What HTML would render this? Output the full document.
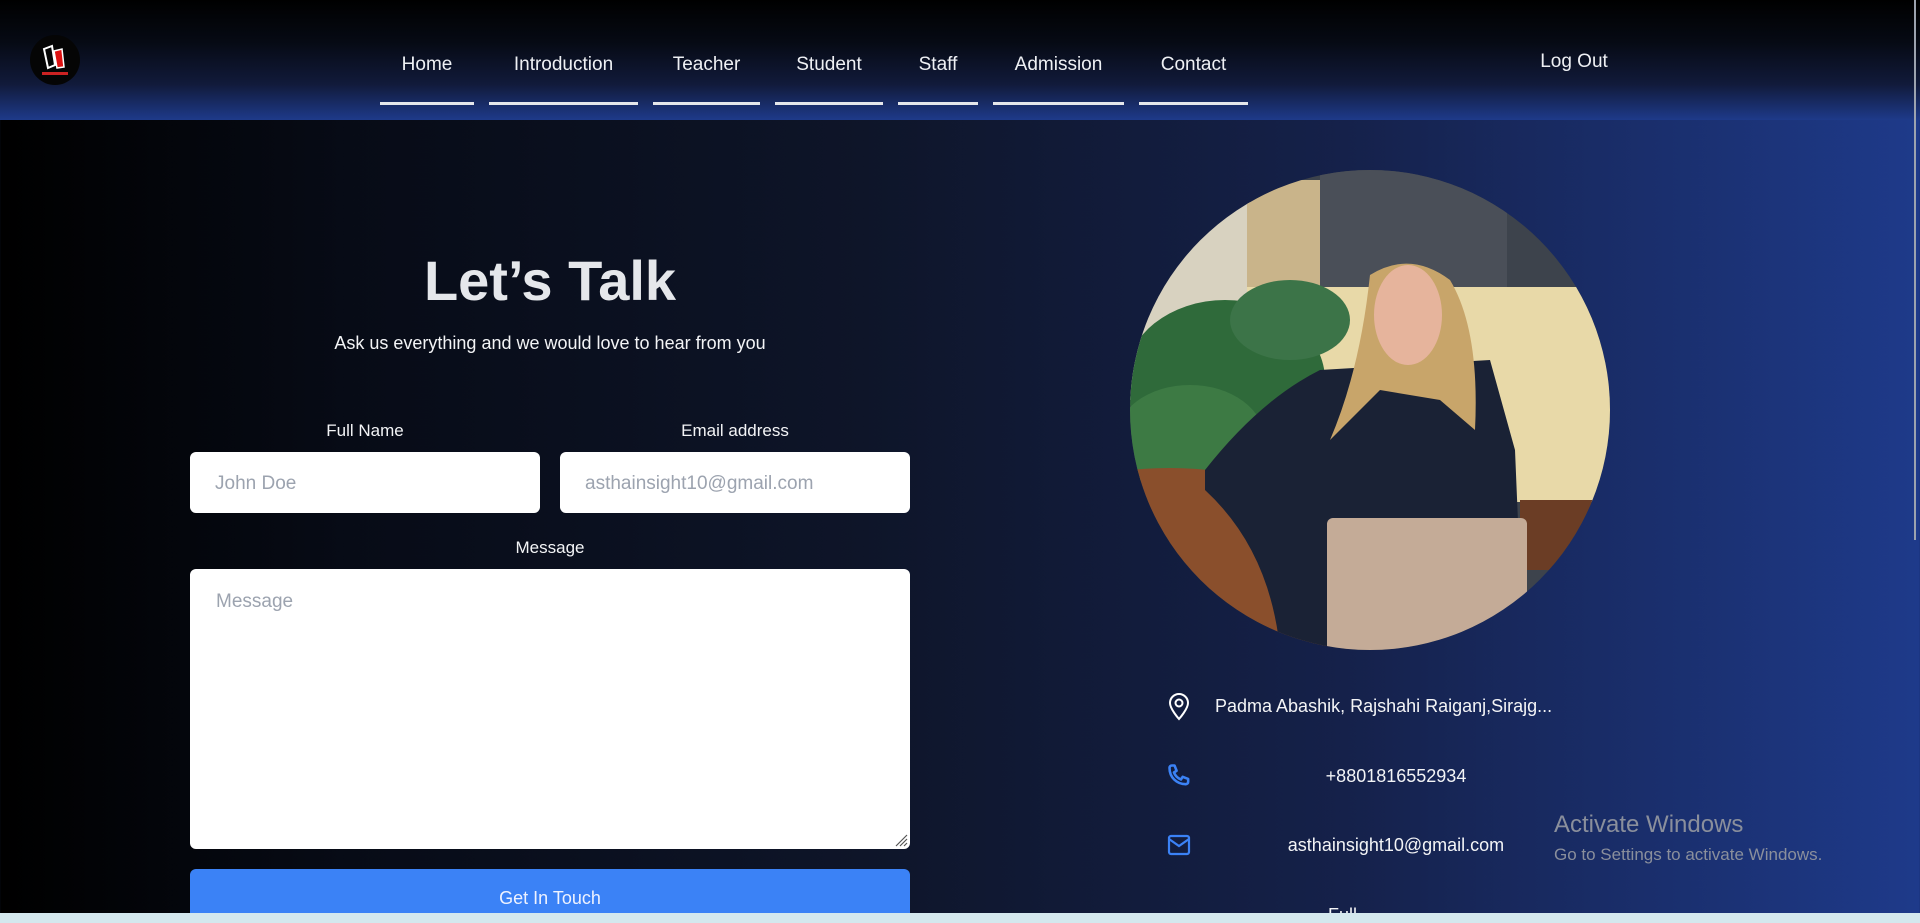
<!DOCTYPE html>
<html><head><meta charset="utf-8"><style>
*{margin:0;padding:0;box-sizing:border-box}
html,body{width:1920px;height:923px;overflow:hidden}
body{font-family:"Liberation Sans",sans-serif;background:linear-gradient(to right,#000 0%,#070b16 18%,#0e1529 45%,#15214a 70%,#1e3a8a 100%);position:relative;color:#e5e7eb}
.hdr{position:absolute;left:0;top:0;width:1920px;height:120px;background:linear-gradient(to bottom,#000 0%,#060a14 35%,#111a3a 70%,#1e3a8a 100%)}
.nav{position:absolute;top:54px;font-size:19px;color:#eef0f4;text-align:center}
.ul{position:absolute;top:102px;height:3px;background:#e5e7eb}
.abs{position:absolute}
.inp{position:absolute;background:#fff;border-radius:6px;color:#9ca3af;font-size:19px}
.lbl{position:absolute;font-size:17px;color:#f3f4f6;text-align:center}
</style></head><body>
<div class="hdr"></div>
<div class="abs" style="left:30px;top:35px;width:50px;height:50px;border-radius:50%;background:#050505">
<svg width="50" height="50" viewBox="0 0 50 50"><path d="M14 14 L22 11 L25 30 L18 33 Z" fill="none" stroke="#fff" stroke-width="2"/><path d="M24 16 L32 14 L34 32 L27 33 Z" fill="#d11" stroke="#fff" stroke-width="1.5"/><rect x="12" y="37" width="26" height="3" fill="#c22"/></svg></div>
<div class="nav" style="left:380px;width:94px">Home</div>
<div class="nav" style="left:489px;width:149px">Introduction</div>
<div class="nav" style="left:653px;width:107px">Teacher</div>
<div class="nav" style="left:775px;width:108px">Student</div>
<div class="nav" style="left:898px;width:80px">Staff</div>
<div class="nav" style="left:993px;width:131px">Admission</div>
<div class="nav" style="left:1139px;width:109px">Contact</div>
<div class="nav" style="left:1530px;width:88px;top:51px">Log Out</div>
<div class="ul" style="left:380px;width:94px"></div>
<div class="ul" style="left:489px;width:149px"></div>
<div class="ul" style="left:653px;width:107px"></div>
<div class="ul" style="left:775px;width:108px"></div>
<div class="ul" style="left:898px;width:80px"></div>
<div class="ul" style="left:993px;width:131px"></div>
<div class="ul" style="left:1139px;width:109px"></div>
<div class="abs" style="left:1914px;top:0;width:2px;height:540px;background:#9ca3af"></div>

<div class="abs" style="left:190px;width:720px;top:248px;text-align:center;font-size:56px;font-weight:bold;color:#e5e7eb">Let’s Talk</div>
<div class="abs" style="left:190px;width:720px;top:333px;text-align:center;font-size:18px;color:#f3f4f6">Ask us everything and we would love to hear from you</div>
<div class="lbl" style="left:190px;width:350px;top:421px">Full Name</div>
<div class="lbl" style="left:560px;width:350px;top:421px">Email address</div>
<div class="inp" style="left:190px;top:452px;width:350px;height:61px;padding:21px 0 0 25px">John Doe</div>
<div class="inp" style="left:560px;top:452px;width:350px;height:61px;padding:21px 0 0 25px">asthainsight10@gmail.com</div>
<div class="lbl" style="left:190px;width:720px;top:538px">Message</div>
<div class="inp" style="left:190px;top:569px;width:720px;height:280px;padding:22px 0 0 26px">Message
<svg class="abs" style="right:2px;bottom:2px" width="14" height="14"><path d="M2 13 L13 2 M6 13 L13 6 M10 13 L13 10" stroke="#555" stroke-width="1.2"/></svg></div>
<div class="abs" style="left:190px;top:869px;width:720px;height:60px;background:#3b82f6;border-radius:6px;color:#eef2ff;font-size:18px;text-align:center;padding-top:19px">Get In Touch</div>

<svg class="abs" style="left:1130px;top:170px" width="480" height="480" viewBox="0 0 480 480">
<defs><clipPath id="c"><circle cx="240" cy="240" r="240"/></clipPath></defs>
<g clip-path="url(#c)">
<rect width="480" height="480" fill="#3d434c"/>
<rect x="0" y="30" width="120" height="200" fill="#d8d2c0"/>
<rect x="117" y="10" width="73" height="113" fill="#c9b48a"/>
<rect x="190" y="0" width="187" height="123" fill="#4a4f58"/>
<rect x="117" y="117" width="363" height="215" fill="#e8d9a8"/>
<ellipse cx="95" cy="210" rx="100" ry="80" fill="#2f6a3a"/>
<ellipse cx="60" cy="270" rx="75" ry="55" fill="#3d7a44"/>
<ellipse cx="160" cy="150" rx="60" ry="40" fill="#3c7448"/>
<rect x="390" y="330" width="90" height="70" fill="#6b3d25"/>
<path d="M0 300 Q100 290 190 330 L200 480 L0 480 Z" fill="#8a4f2c"/>
<path d="M75 300 Q130 230 190 200 L360 190 L385 280 L390 400 L200 480 L150 480 Q140 380 75 320 Z" fill="#1a2235"/>
<path d="M240 105 Q280 80 320 110 Q350 160 345 260 L310 230 L250 220 L200 270 Q230 200 240 105 Z" fill="#c8a56a"/>
<ellipse cx="278" cy="145" rx="34" ry="50" fill="#e6b49c"/>
<rect x="197" y="348" width="200" height="135" rx="6" fill="#c4ab97"/>
</g></svg>

<svg class="abs" style="left:1167px;top:693px" width="24" height="28" viewBox="0 0 24 28" fill="none" stroke="#fff" stroke-width="2"><path d="M12 26 C12 26 3 16 3 10 A9 9 0 0 1 21 10 C21 16 12 26 12 26 Z"/><circle cx="12" cy="10" r="3.5"/></svg>
<div class="abs" style="left:1215px;top:696px;font-size:18px;color:#f3f4f6">Padma Abashik, Rajshahi Raiganj,Sirajg...</div>
<svg class="abs" style="left:1166px;top:761px" width="28" height="30" viewBox="0 0 24 24" fill="none" stroke="#3b82f6" stroke-width="2.2" stroke-linejoin="round"><path d="M3 5c0-1.1.9-2 2-2h2.3l1.8 4.5-2.3 1.5a11 11 0 0 0 6 6l1.5-2.3L19 14.5V17a2 2 0 0 1-2 2C9 19 3 13 3 5z"/></svg>
<div class="abs" style="left:1296px;width:200px;top:766px;font-size:18px;color:#f3f4f6;text-align:center">+8801816552934</div>
<svg class="abs" style="left:1167px;top:834px" width="24" height="22" viewBox="0 0 24 22" fill="none" stroke="#3b82f6" stroke-width="2.2"><rect x="2" y="2" width="20" height="18" rx="2"/><path d="M2 5 L12 12 L22 5"/></svg>
<div class="abs" style="left:1246px;width:300px;top:835px;font-size:18px;color:#f3f4f6;text-align:center">asthainsight10@gmail.com</div>
<div class="abs" style="left:1328px;top:905px;font-size:18px;color:#f3f4f6">Full</div>
<div class="abs" style="left:1554px;top:811px;font-size:24px;color:#8a8f9c">Activate Windows</div>
<div class="abs" style="left:1554px;top:845px;font-size:17px;color:#8a8f9c">Go to Settings to activate Windows.</div>
<div class="abs" style="left:0;top:913px;width:1920px;height:10px;background:#d4e8ee"></div>
</body></html>
